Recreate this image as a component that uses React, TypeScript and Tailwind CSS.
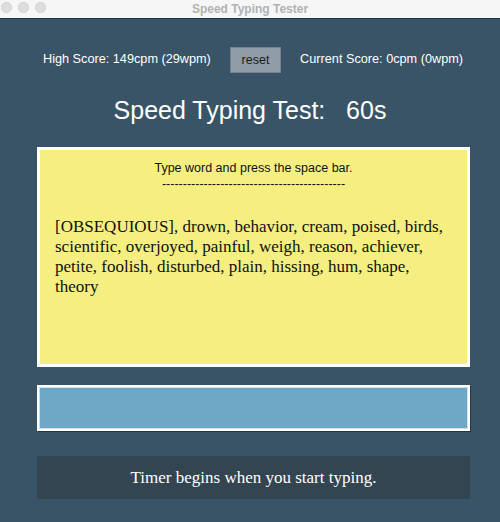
const words =
  "[OBSEQUIOUS], drown, behavior, cream, poised, birds, scientific, overjoyed, painful, weigh, reason, achiever, petite, foolish, disturbed, plain, hissing, hum, shape, theory";

function TitleBar() {
  return (
    <div className="relative flex h-[19px] items-center justify-center border-b border-[#1c3646] bg-[#f6f6f6]">
      <div className="absolute left-[1px] top-[2px] flex gap-[6px]">
        <span className="h-[11px] w-[11px] rounded-full border border-[#cfcfcf] bg-[#dedede]" />
        <span className="h-[11px] w-[11px] rounded-full border border-[#cfcfcf] bg-[#dedede]" />
        <span className="h-[11px] w-[11px] rounded-full border border-[#cfcfcf] bg-[#dedede]" />
      </div>
      <span className="text-[12px] font-bold text-[#b2b2b2]">Speed Typing Tester</span>
    </div>
  );
}

export default function App() {
  return (
    <div className="flex h-[522px] w-[500px] flex-col bg-[#385466] font-['Liberation_Sans',Arial,sans-serif]">
      <TitleBar />

      <div className="flex items-center justify-between pl-[43px] pr-[37px] pt-[28px] text-[12.7px] text-white">
        <span>High Score: 149cpm (29wpm)</span>
        <button className="h-[26px] w-[51px] border border-[#74848e] bg-[#8e9da6] text-[12.5px] text-[#1c1c1c]">
          reset
        </button>
        <span>Current Score: 0cpm (0wpm)</span>
      </div>

      <h1 className="mt-[22px] text-center text-[25px] leading-[30px] text-white">
        Speed Typing Test:&nbsp;&nbsp; 60s
      </h1>

      <div className="ml-[37px] mr-[30px] mt-[22px] h-[220px] border-[3px] border-white bg-[#f4ef80]">
        <div className="pt-[10px] text-center text-[12.5px] leading-[16px] text-[#111]">
          <p>Type word and press the space bar.</p>
          <p>--------------------------------------------</p>
        </div>
        <p className="mt-[25px] px-[15px] font-['Liberation_Serif','Times_New_Roman',serif] text-[17px] leading-[20px] text-[#111]">
          {words}
        </p>
      </div>

      <div className="ml-[37px] mr-[30px] mt-[18px] h-[46px] bg-white p-[2px] shadow-[1px_1px_0_#223544]">
        <div className="h-full border border-[#cfe0ea] bg-[#6fa7c6]" />
      </div>

      <div className="ml-[37px] mr-[30px] mt-[25px] flex h-[43px] items-center justify-center bg-[#334550] font-['Liberation_Serif','Times_New_Roman',serif] text-[17px] text-white">
        Timer begins when you start typing.
      </div>
    </div>
  );
}
